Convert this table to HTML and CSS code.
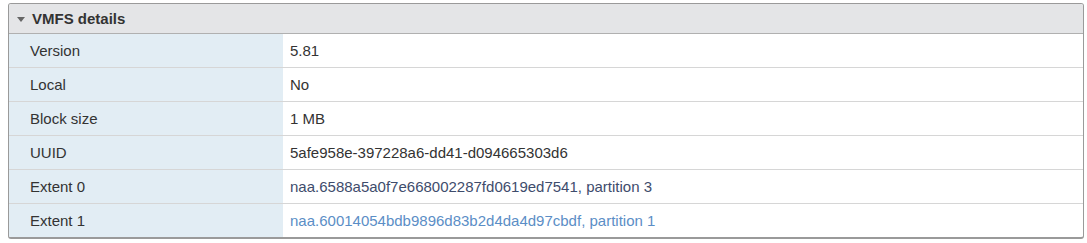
FILE: index.html
```html
<!DOCTYPE html>
<html>
<head>
<meta charset="utf-8">
<link rel="stylesheet" href="styles.css">
</head>
<body>
<div class="card">
  <div class="card-header">
    <svg class="caret" width="8" height="5" viewBox="0 0 8 5"><path d="M0 0 L8 0 L4 5 Z" fill="#666"/></svg>
    <span class="title">VMFS details</span>
  </div>
  <div class="rows">
    <div class="row"><div class="label">Version</div><div class="value">5.81</div></div>
    <div class="row"><div class="label">Local</div><div class="value">No</div></div>
    <div class="row"><div class="label">Block size</div><div class="value">1 MB</div></div>
    <div class="row"><div class="label">UUID</div><div class="value">5afe958e-397228a6-dd41-d094665303d6</div></div>
    <div class="row"><div class="label">Extent 0</div><div class="value"><a class="link dark">naa.6588a5a0f7e668002287fd0619ed7541, partition 3</a></div></div>
    <div class="row"><div class="label">Extent 1</div><div class="value"><a class="link">naa.60014054bdb9896d83b2d4da4d97cbdf, partition 1</a></div></div>
  </div>
</div>
</body>
</html>
```
FILE: styles.css
```css
* { box-sizing: border-box; }
body {
  margin: 0;
  padding: 3px 3px 0 8px;
  background: #fff;
  font-family: "Liberation Sans", Arial, sans-serif;
  color: #333;
}
.card {
  width: 1076px;
  border: 1px solid #9a9a9a;
  border-bottom-width: 2px;
  border-radius: 3px;
  overflow: hidden;
}
.card-header {
  height: 30px;
  background: #e4e5e7;
  border-bottom: 1px solid #b0b0b0;
  display: flex;
  align-items: center;
  padding-left: 8px;
  gap: 7px;
}
.caret { margin-top: 1px; }
.title {
  font-weight: bold;
  font-size: 15px;
  color: #333;
}
.row {
  display: flex;
  height: 34px;
  border-top: 1px solid #d6d6d6;
  font-size: 15px;
}
.row:first-child { border-top: none; height: 33px; }
.label {
  width: 274px;
  background: #e2edf4;
  padding-left: 21px;
  display: flex;
  align-items: center;
}
.value {
  flex: 1;
  padding-left: 7px;
  display: flex;
  align-items: center;
}
.link { color: #5b8ec6; }
.link.dark { color: #3e4c6c; }
```
